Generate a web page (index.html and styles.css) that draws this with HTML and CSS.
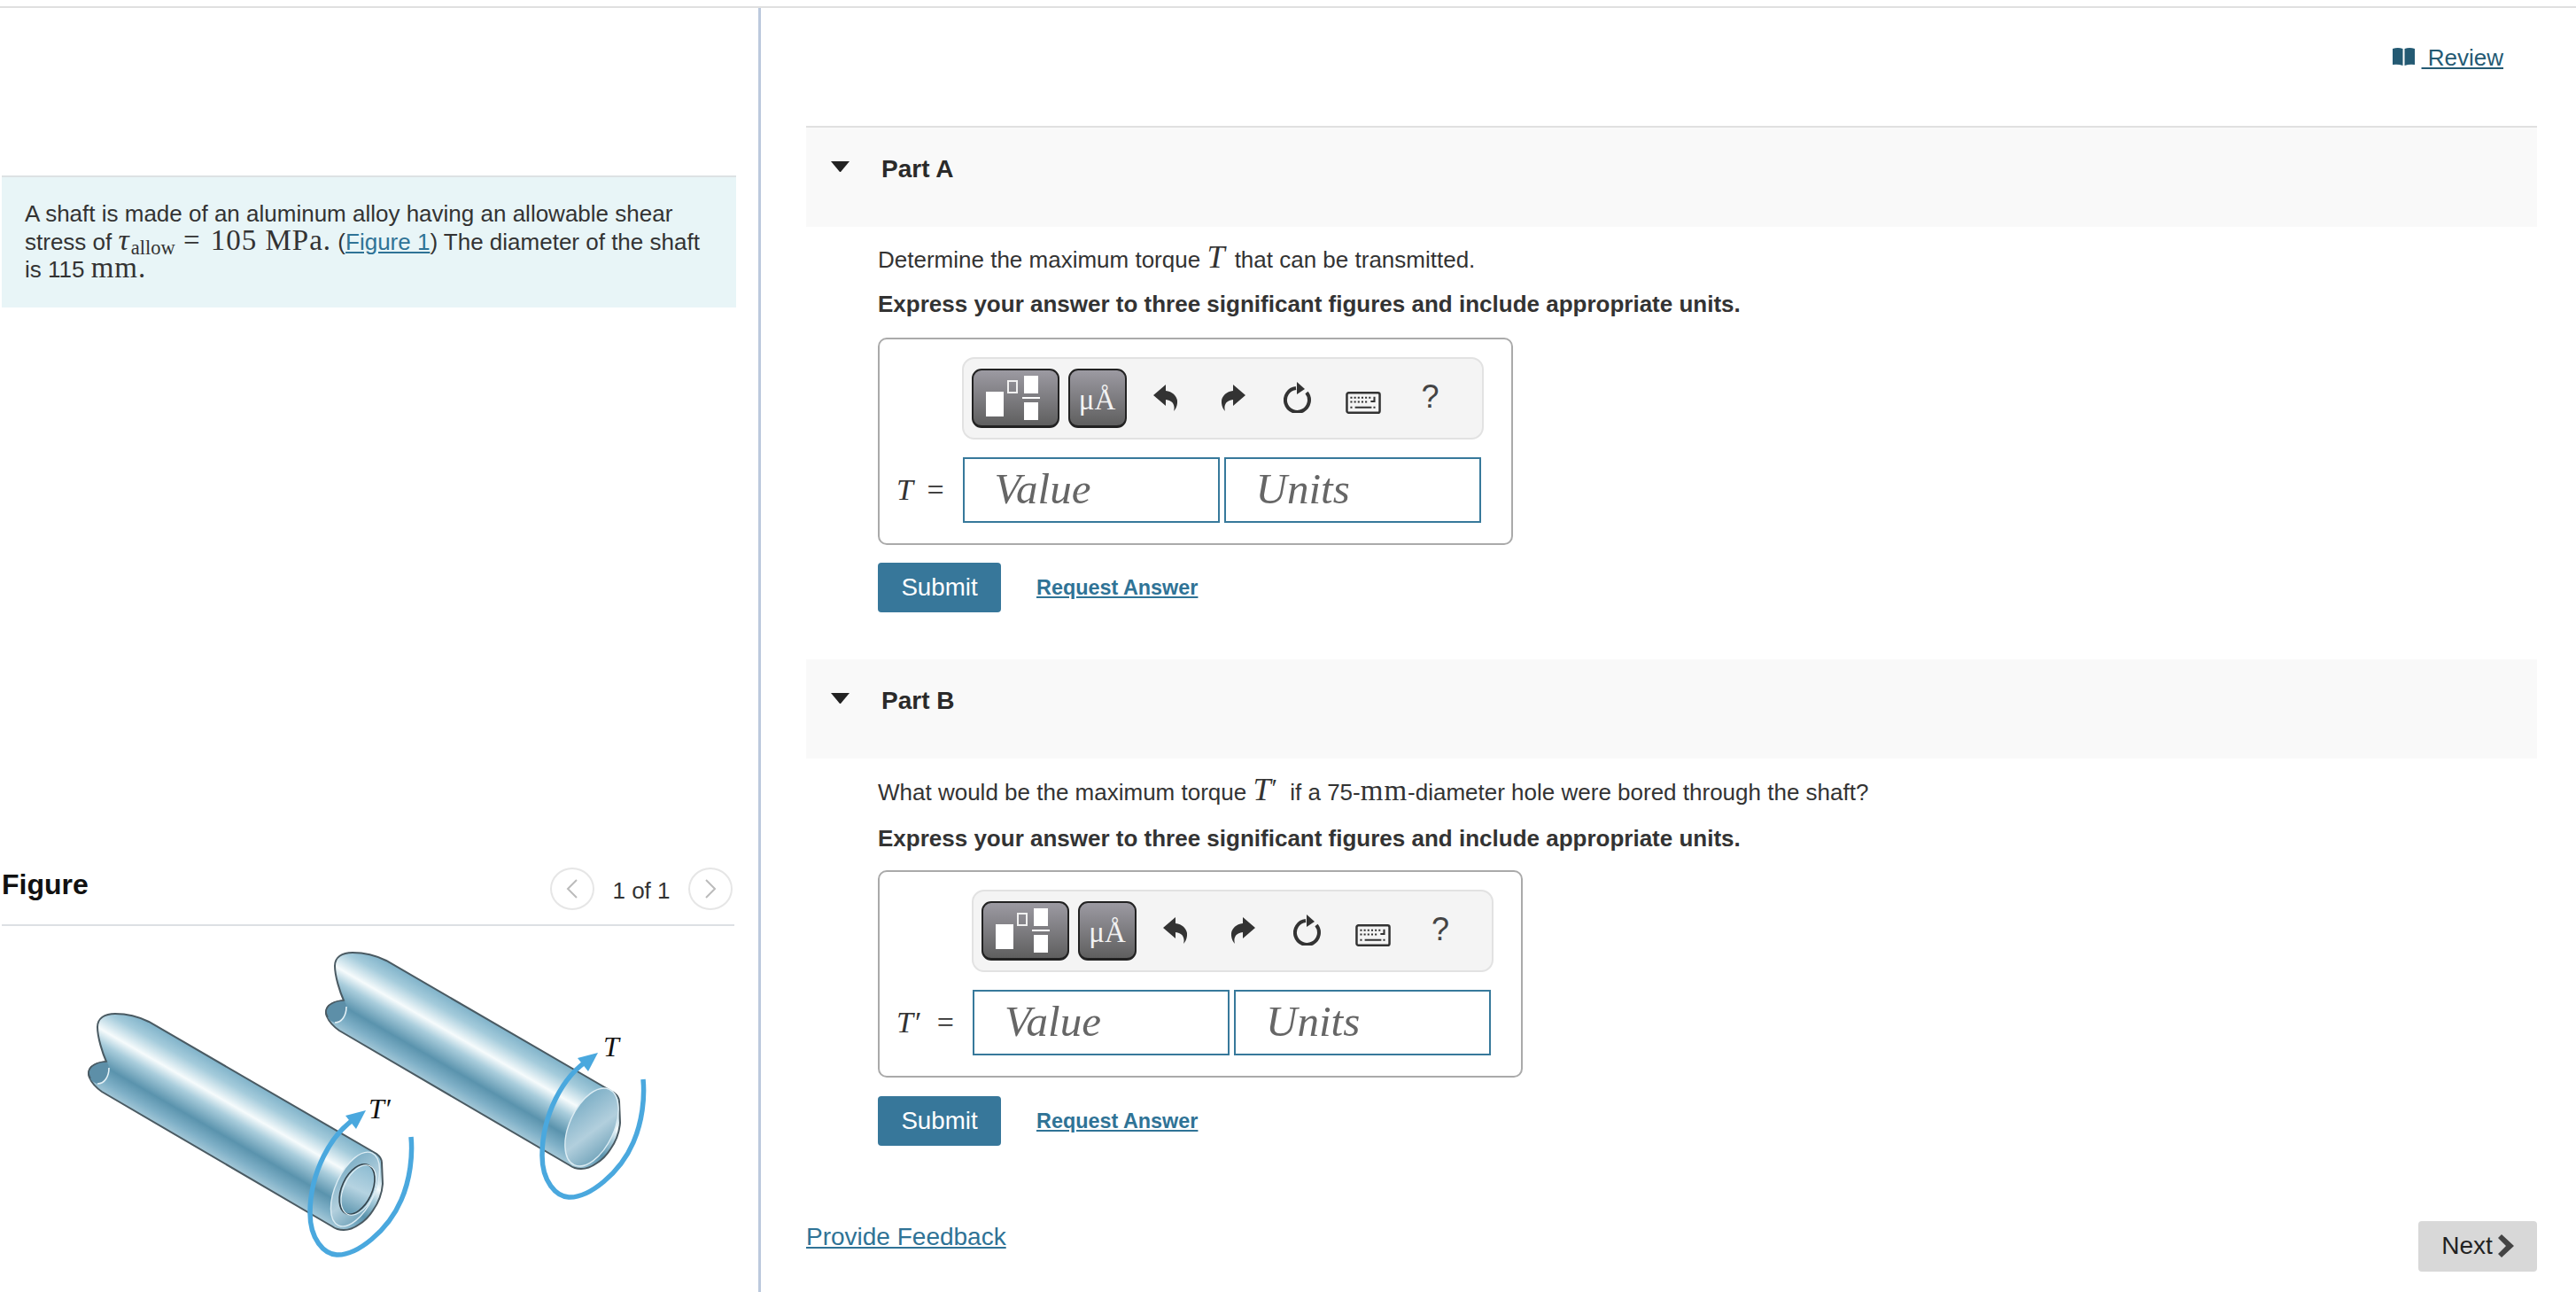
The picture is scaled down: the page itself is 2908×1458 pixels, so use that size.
FILE: index.html
```html
<!DOCTYPE html>
<html lang="en">
<head>
<meta charset="utf-8">
<title>Part A and Part B</title>
<link rel="stylesheet" href="styles.css">
</head>
<body>
<svg class="sprites" width="0" height="0" aria-hidden="true">
  <defs>
    <symbol id="ic-undo" viewBox="0 0 27 30"><path d="M0 12 L14 0 V7 C23 8 28 15 27 21 C26.6 25 25 28 23 30 C24.5 25 23.5 18 14 17 V24 Z"/></symbol>
    <symbol id="ic-redo" viewBox="0 0 27 30"><path d="M27 12 L13 0 V7 C4 8 -1 15 0 21 C.4 25 2 28 4 30 C2.5 25 3.5 18 13 17 V24 Z"/></symbol>
    <symbol id="ic-refresh" viewBox="0 0 32 35"><path d="M14 7 A13.5 13.5 0 1 0 26 12" fill="none" stroke="currentColor" stroke-width="4"/><path d="M15 0 L24 8 L15 14 Z"/></symbol>
    <symbol id="ic-keys" viewBox="0 0 38 24"><rect x="1.2" y="1.2" width="35.6" height="21.6" rx="2" fill="none" stroke="currentColor" stroke-width="2.4"/><path d="M5 5.5h2v2H5zM9 5.5h2v2H9zM13 5.5h2v2h-2zM17 5.5h2v2h-2zM21 5.5h2v2h-2zM25 5.5h2v2h-2zM30 5.5h2v6h-5v-2h3zM5 10h2v2H5zM9 10h2v2H9zM13 10h2v2h-2zM17 10h2v2h-2zM21 10h2v2h-2zM5 16h2v2H5zM10 16h18v2H10zM30 16h2v2h-2z"/></symbol>
  </defs>
</svg>
<div class="page">
  <aside class="left">
    <section class="problem">
      <p>A shaft is made of an aluminum alloy having an allowable shear stress of <span class="math"><i class="tau">τ</i><sub>allow</sub> <span class="eq">=</span> 105 MPa.</span> (<a href="#fig" class="link">Figure 1</a>) The diameter of the shaft is 115 <span class="math">mm.</span></p>
    </section>
    <section class="figure" id="fig">
      <header class="figure-head">
        <h2>Figure</h2>
        <div class="pager">
          <span class="circle"><svg width="14" height="22" viewBox="0 0 14 22"><path d="M12 1 L2 11 L12 21" fill="none" stroke="#bbb" stroke-width="2"/></svg></span>
          <span class="count">1 of 1</span>
          <span class="circle"><svg width="14" height="22" viewBox="0 0 14 22"><path d="M2 1 L12 11 L2 21" fill="none" stroke="#bbb" stroke-width="2"/></svg></span>
        </div>
      </header>
      <svg class="shafts" width="857" height="412" viewBox="0 1046 857 412">
        <defs>
          <linearGradient id="body" gradientUnits="userSpaceOnUse" x1="300" y1="1229" x2="252" y2="1312">
            <stop offset="0" stop-color="#7fb2c9"/>
            <stop offset=".16" stop-color="#a4cbdb"/>
            <stop offset=".36" stop-color="#f6fbfc"/>
            <stop offset=".5" stop-color="#a9cddc"/>
            <stop offset=".72" stop-color="#5a93ad"/>
            <stop offset=".88" stop-color="#7fb0c7"/>
            <stop offset="1" stop-color="#a4c8d8"/>
          </linearGradient>
          <linearGradient id="face" x1="0" y1="0" x2="1" y2="1">
            <stop offset="0" stop-color="#6ea6c0"/>
            <stop offset=".55" stop-color="#b2cfdd"/>
            <stop offset="1" stop-color="#5f97b0"/>
          </linearGradient>
          <linearGradient id="bore" x1="0" y1="0" x2="0" y2="1">
            <stop offset="0" stop-color="#8dbcd2"/>
            <stop offset=".5" stop-color="#b5d3e1"/>
            <stop offset="1" stop-color="#5f97b0"/>
          </linearGradient>
          <path id="shaft-body" d="M112 1160 C112 1150 120 1145 132 1145 C148 1145 160 1149 170 1154 L427 1303 C431 1306 433 1310 433 1313 L434 1337 C433 1350 428 1360 423 1367 C418 1375 412 1380 407 1383 C400 1388 395 1389 390 1389 C385 1389 381 1388 377 1385 L117 1233 C110 1228 105 1222 103 1217 C101 1213 102 1208 105 1205 C110 1201 116 1200 122 1199 C118 1190 112 1172 112 1160 Z"/>
          <g id="tail">
            <path d="M122 1199 C112 1199 102 1204 102 1212 C102 1219 108 1224 114 1224 C120 1224 125 1216 125 1208 C125 1204 124 1201 122 1199 Z" fill="#5d8fa8"/>
            <path d="M122 1199 C112 1199 102 1204 102 1212 C102 1214 103 1216 104 1218" fill="none" stroke="#4a5a62" stroke-width="1.6"/>
            <path d="M125 1206 C125 1216 120 1224 112 1224" fill="none" stroke="#e4f1f6" stroke-width="1.6"/>
          </g>
          <g id="arrow">
            <path d="M406 1261 C375 1280 352 1325 352 1370 C352 1400 368 1416 382 1417 C405 1418 440 1390 455 1355 C465 1332 468 1305 466 1284" fill="none" stroke="#4aa8de" stroke-width="5.5"/>
            <path d="M415 1254 L392 1260 L404 1275 Z" fill="#4aa8de"/>
          </g>
        </defs>
        <g>
          <use href="#shaft-body" fill="url(#body)" stroke="#4a5a62" stroke-width="2"/>
          <use href="#tail"/>
          <ellipse cx="403" cy="1343" rx="22" ry="45" transform="rotate(25 403 1343)" fill="url(#face)" stroke="#dcecf3" stroke-width="1.4"/>
          <ellipse cx="405" cy="1343" rx="17" ry="30" transform="rotate(25 405 1343)" fill="url(#bore)" stroke="#35444c" stroke-width="1.6"/>
          <ellipse cx="407" cy="1344" rx="17" ry="30" transform="rotate(25 407 1344)" fill="none" stroke="#e6f2f7" stroke-width="1"/>
          <use href="#arrow"/>
          <text class="fig-t" x="418" y="1263">T′</text>
        </g>
        <g transform="translate(268 -69)">
          <use href="#shaft-body" fill="url(#body)" stroke="#4a5a62" stroke-width="2"/>
          <use href="#tail"/>
          <ellipse cx="402" cy="1342" rx="25" ry="47" transform="rotate(25 402 1342)" fill="url(#face)" stroke="#dcecf3" stroke-width="1.4"/>
        </g>
        <g transform="translate(262 -65)"><use href="#arrow"/></g>
        <text class="fig-t" x="683" y="1193">T</text>
      </svg>
    </section>
  </aside>
  <main class="right">
    <div class="review-row">
      <a class="review" href="#review"><svg class="book" width="25" height="20" viewBox="0 0 25 20"><path d="M0 1 Q6 -1 11.5 1 V20 Q6 18 0 19 Z M13.5 1 Q19 -1 25 1 V19 Q19 18 13.5 20 Z"/></svg><span class="review-text">&nbsp;Review</span></a>
    </div>

    <section class="part first">
      <header class="part-head"><span class="tri"></span><h3>Part A</h3></header>
      <div class="part-body">
        <p class="q">Determine the maximum torque <i class="mvar">T</i> that can be transmitted.</p>
        <p class="ins">Express your answer to three significant figures and include appropriate units.</p>
        <div class="answer">
          <div class="toolbar">
            <span class="tbtn wide"><span class="g g1"></span><span class="g g2"></span><span class="g g3"></span><span class="g g4"></span><span class="g g5"></span></span>
            <span class="tbtn narrow">μÅ</span>
            <svg class="ic undo"><use href="#ic-undo"/></svg>
            <svg class="ic redo"><use href="#ic-redo"/></svg>
            <svg class="ic refresh"><use href="#ic-refresh"/></svg>
            <svg class="ic keys"><use href="#ic-keys"/></svg>
            <span class="help">?</span>
          </div>
          <label class="lbl"><i>T</i> =</label>
          <div class="inputs"><input class="fld" placeholder="Value"><input class="fld" placeholder="Units"></div>
        </div>
        <div class="actions"><button class="submit">Submit</button><a class="req" href="#a">Request Answer</a></div>
      </div>
    </section>

    <section class="part second">
      <header class="part-head"><span class="tri"></span><h3>Part B</h3></header>
      <div class="part-body">
        <p class="q">What would be the maximum torque <i class="mvar">T</i><span class="prime">′</span> if a 75-<span class="math">mm</span>-diameter hole were bored through the shaft?</p>
        <p class="ins">Express your answer to three significant figures and include appropriate units.</p>
        <div class="answer">
          <div class="toolbar">
            <span class="tbtn wide"><span class="g g1"></span><span class="g g2"></span><span class="g g3"></span><span class="g g4"></span><span class="g g5"></span></span>
            <span class="tbtn narrow">μÅ</span>
            <svg class="ic undo"><use href="#ic-undo"/></svg>
            <svg class="ic redo"><use href="#ic-redo"/></svg>
            <svg class="ic refresh"><use href="#ic-refresh"/></svg>
            <svg class="ic keys"><use href="#ic-keys"/></svg>
            <span class="help">?</span>
          </div>
          <label class="lbl"><i>T</i><span class="lbl-prime">′</span> =</label>
          <div class="inputs"><input class="fld" placeholder="Value"><input class="fld" placeholder="Units"></div>
        </div>
        <div class="actions"><button class="submit">Submit</button><a class="req" href="#a">Request Answer</a></div>
      </div>
    </section>

    <footer class="foot">
      <a class="feedback" href="#f">Provide Feedback</a>
      <button class="next">Next<svg width="18" height="26" viewBox="0 0 18 26"><path d="M4 0 L18 13 L4 26 L0 22 L9 13 L0 4 Z"/></svg></button>
    </footer>
  </main>
</div>
</body>
</html>
```

FILE: styles.css
```css
* { box-sizing: border-box; }
html, body { margin: 0; padding: 0; height: 100%; background: #fff; overflow: hidden; }
body { font-family: "Liberation Sans", Arial, sans-serif; font-size: 26px; color: #333; }
.sprites { position: absolute; }
p { margin: 0; }
.page { display: flex; height: 1458px; margin-top: 7px; border-top: 2px solid #e0e0e0; }
.left { width: 859px; flex: none; border-right: 3px solid #bcc9dd; }
.problem { margin: 189px 0 0 2px; width: 829px; height: 149px; background: #e8f5f7; border-top: 2px solid #dde2e4; padding: 26px 30px 0 26px; line-height: 31.5px; }
.math { font-family: "Liberation Serif", serif; font-size: 33px; letter-spacing: 1px; line-height: 0; }
.tau { font-size: 34px; margin-right: 1px; }
.eq { margin-right: 2px; }
sub { font-size: 22.5px; letter-spacing: 0; line-height: 0; vertical-align: -5px; }
.link { color: #2f7396; }
.figure { margin-top: 619px; }
.figure-head { margin-left: 2px; width: 827px; height: 79px; border-bottom: 2px solid #dde0e4; display: flex; justify-content: space-between; }
.figure-head h2 { margin: 12px 0 0; font-size: 32px; line-height: 40px; color: #111; }
.pager { display: flex; align-items: flex-start; padding-top: 13px; margin-right: 2px; }
.circle { width: 50px; height: 48px; border: 2px solid #e6e6e6; border-radius: 50%; display: flex; align-items: center; justify-content: center; }
.count { width: 106px; text-align: center; margin-top: 10px; line-height: 32px; color: #333; }
.shafts { display: block; margin-left: -2px; }
.fig-t { font-family: "Liberation Serif", serif; font-style: italic; font-size: 32px; fill: #111; }

.right { flex: 1; padding: 0 44px 0 51px; min-width: 0; }
.review-row { height: 133px; display: flex; justify-content: flex-end; padding: 41px 38px 0 0; }
.review { color: #245a73; display: flex; align-items: flex-start; text-decoration: none; }
.book { fill: #245a73; margin: 4px 8px 0 0; }
.review-text { text-decoration: underline; line-height: 30px; }
.part.second { margin-top: 53px; }
.part.first .part-head { height: 114px; border-top: 2px solid #e0e0e0; }
.part-head { height: 112px; background: #f9f9f9; display: flex; align-items: flex-start; padding: 30px 0 0 28px; }
.tri { width: 21px; height: 0; margin-top: 8px; border-left: 10.5px solid transparent; border-right: 10.5px solid transparent; border-top: 12px solid #222; }
.part-head h3 { margin: 0 0 0 36px; font-size: 28px; line-height: 34px; color: #2a2a2a; }
.part-body { padding: 22px 0 0 81px; }
.first .part-body { padding-top: 21px; }
.q { line-height: 32px; }
.mvar { font-family: "Liberation Serif", serif; font-size: 36px; line-height: 0; margin: 0 4px 0 0; }
.q .math { letter-spacing: 1px; }
.prime { font-family: "Liberation Serif", serif; font-size: 30px; line-height: 0; position: relative; top: -4px; margin: 0 7px 0 -3px; }
.ins { margin-top: 20px; font-weight: bold; line-height: 32px; }
.first .ins { margin-top: 18px; }
.answer { margin-top: 20px; display: inline-grid; grid-template-columns: auto 589px; border: 2px solid #aaa; border-radius: 10px; padding: 20px 31px 23px 19px; align-items: center; vertical-align: top; }
.first .answer { margin-top: 22px; }
.toolbar { grid-column: 2; align-self: start; height: 93px; background: #f4f4f4; border: 2px solid #e2e2e2; border-radius: 14px; padding: 11px 0 0 9px; display: flex; align-items: flex-start; }
.toolbar > * { flex: none; }
.tbtn { display: block; position: relative; height: 67px; border: 2px solid #222; border-bottom-width: 3px; border-radius: 11px; background: linear-gradient(#9c9aa2, #5f5f5f); }
.wide { width: 99px; }
.narrow { width: 66px; margin-left: 10px; color: #f2f2f2; font-family: "Liberation Serif", serif; font-size: 33px; text-align: center; line-height: 54px; padding-top: 6px; }
.g { position: absolute; background: #fff; }
.g1 { left: 14px; top: 24px; width: 20px; height: 28px; }
.g2 { left: 38px; top: 11px; width: 12px; height: 15px; background: none; border: 2px solid #f0f0f0; }
.g3 { left: 57px; top: 6px; width: 16px; height: 20px; }
.g4 { left: 55px; top: 30px; width: 20px; height: 2px; }
.g5 { left: 57px; top: 36px; width: 16px; height: 20px; }
.ic { fill: #333; color: #333; display: block; }
.undo { width: 27px; height: 30px; margin: 18px 0 0 30px; }
.redo { width: 27px; height: 30px; margin: 18px 0 0 50px; }
.refresh { width: 32px; height: 35px; margin: 15px 0 0 43px; }
.keys { width: 40px; height: 25px; margin: 26px 0 0 38px; }
.help { margin: 12px 0 0 46px; font-size: 36px; line-height: 40px; color: #444; font-family: "Liberation Sans", sans-serif; }
.lbl { font-family: "Liberation Serif", serif; font-size: 34px; color: #333; white-space: nowrap; word-spacing: 6px; padding-right: 20px; margin-top: 20px; }
.lbl i { margin-right: 1px; }
.lbl-prime { margin: 0 3px 0 1px; }
.inputs { display: flex; gap: 5px; margin: 20px 0 0 1px; }
.fld { width: 290px; height: 74px; border: 2px solid #37799b; background: #fff; padding: 0 0 3px 34px; font: italic 49px "Liberation Serif", serif; outline: none; border-radius: 0; }
.fld::placeholder { color: #666; opacity: 1; }
.actions { margin-top: 20px; display: flex; align-items: center; }
.second .actions { margin-top: 21px; }
.submit { width: 139px; height: 56px; border: 0; border-radius: 4px; background: #37779a; color: #fff; font: 27.7px "Liberation Sans", sans-serif; padding: 0; }
.req { margin-left: 40px; font-size: 23.4px; font-weight: bold; color: #2f7396; }
.foot { margin-top: 62px; display: flex; justify-content: space-between; align-items: flex-start; }
.feedback { margin-top: 23px; font-size: 28px; line-height: 36px; color: #2f7396; }
.next { margin-top: 23px; width: 134px; height: 57px; border: 0; border-radius: 4px; background: #d8d8d8; color: #222; font: 28px "Liberation Sans", sans-serif; display: flex; align-items: center; justify-content: center; gap: 6px; padding: 0 0 2px; }
.next svg { fill: #444; }
```
